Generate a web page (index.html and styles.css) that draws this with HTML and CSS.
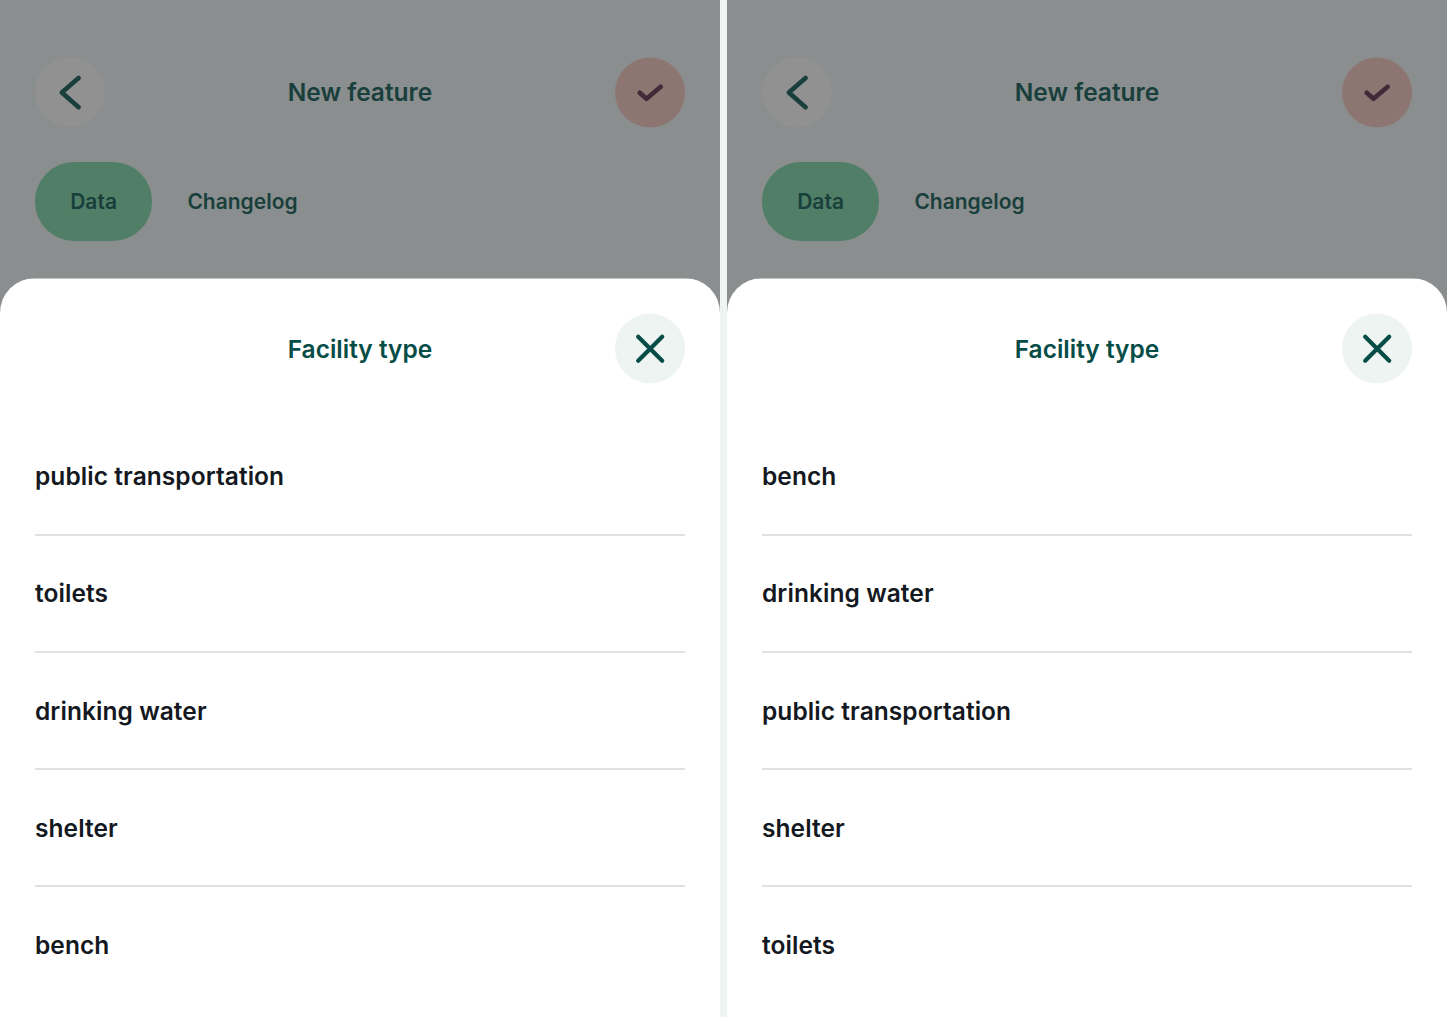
FILE: index.html
```html
<!DOCTYPE html>
<html lang="en">
<head>
<meta charset="utf-8">
<title>Facility type</title>
<link rel="stylesheet" href="styles.css">
</head>
<body>
<main class="screens">
  <section class="screen">
    <div class="backdrop">
      <header class="bar">
        <svg class="round back" viewBox="0 0 70 70"><circle cx="35" cy="35.200" r="35"/><path d="M43.600 20.900L26.800 35.500L43.600 50.200"/></svg>
        <h1 class="title">New feature</h1>
        <svg class="round confirm" viewBox="0 0 70 70"><circle cx="35" cy="35.500" r="35"/><path d="M24.700 35.700L31.500 41.800L45.700 29.700"/></svg>
      </header>
      <nav class="tabs"><span class="tab active">Data</span><span class="tab">Changelog</span></nav>
    </div>
    <div class="sheet">
      <header class="bar">
        <h2 class="title">Facility type</h2>
        <svg class="round close" viewBox="0 0 70 70"><circle cx="35" cy="35.500" r="35"/><path d="M23.200 23.700L47.200 47.700M47.200 23.700L23.200 47.700"/></svg>
      </header>
      <ul class="options">
        <li>public transportation</li>
        <li>toilets</li>
        <li>drinking water</li>
        <li>shelter</li>
        <li>bench</li>
      </ul>
    </div>
  </section>
  <section class="screen">
    <div class="backdrop">
      <header class="bar">
        <svg class="round back" viewBox="0 0 70 70"><circle cx="35" cy="35.200" r="35"/><path d="M43.600 20.900L26.800 35.500L43.600 50.200"/></svg>
        <h1 class="title">New feature</h1>
        <svg class="round confirm" viewBox="0 0 70 70"><circle cx="35" cy="35.500" r="35"/><path d="M24.700 35.700L31.500 41.800L45.700 29.700"/></svg>
      </header>
      <nav class="tabs"><span class="tab active">Data</span><span class="tab">Changelog</span></nav>
    </div>
    <div class="sheet">
      <header class="bar">
        <h2 class="title">Facility type</h2>
        <svg class="round close" viewBox="0 0 70 70"><circle cx="35" cy="35.500" r="35"/><path d="M23.200 23.700L47.200 47.700M47.200 23.700L23.200 47.700"/></svg>
      </header>
      <ul class="options">
        <li>bench</li>
        <li>drinking water</li>
        <li>public transportation</li>
        <li>shelter</li>
        <li>toilets</li>
      </ul>
    </div>
  </section>
</main>
</body>
</html>
```
FILE: styles.css
```css
* { box-sizing: border-box; }
body { margin: 0; background: #eef4f2; font-family: Inter, sans-serif; font-optical-sizing: none; }
.screens { display: grid; grid-template-columns: 720px 720px; gap: 7px; height: 1017px; overflow: hidden; }
.screen { display: flex; flex-direction: column; background: #8a8e8e; }
.backdrop { height: 278px; padding: 57px 35px 0; color: #193f3c; }
.bar { display: grid; grid-template-columns: 70px 1fr 70px; align-items: center; height: 70px; }
.title { grid-column: 2; margin: 0; text-align: center; font-size: 24.500px; line-height: 32px; font-weight: 600; }
.sheet .title { padding-top: 2px; }
.round { display: block; width: 70px; height: 70px; overflow: visible; }
.round path { fill: none; stroke: currentColor; stroke-width: 4.600; stroke-linecap: round; stroke-linejoin: round; }
.back circle { fill: #929191; }
.confirm { color: #422a39; }
.confirm circle { fill: #8d7672; }
.tabs { display: flex; margin-top: 35px; }
.tab { display: flex; align-items: center; height: 78.500px; padding: 0 35.200px; border-radius: 39px; font-size: 21px; font-weight: 600; }
.active { background: #507e66; }
.sheet { flex: 1; padding: 35px 35px 0; border-radius: 35px 35px 0 0; background: linear-gradient(#c4c6c6 1px, #fff 1px); color: #074d47; }
.close { grid-column: 3; }
.close circle { fill: #eef4f2; }
.close path { stroke-width: 4.200; }
.options { list-style: none; margin: 35.700px 0 0; padding: 0; color: #141820; }
.options li { display: flex; align-items: center; height: 117.200px; border-bottom: 2px solid #e0e2e2; font-size: 24.500px; font-weight: 600; letter-spacing: .07px; }
.options li:last-child { border-bottom-color: transparent; }
```
